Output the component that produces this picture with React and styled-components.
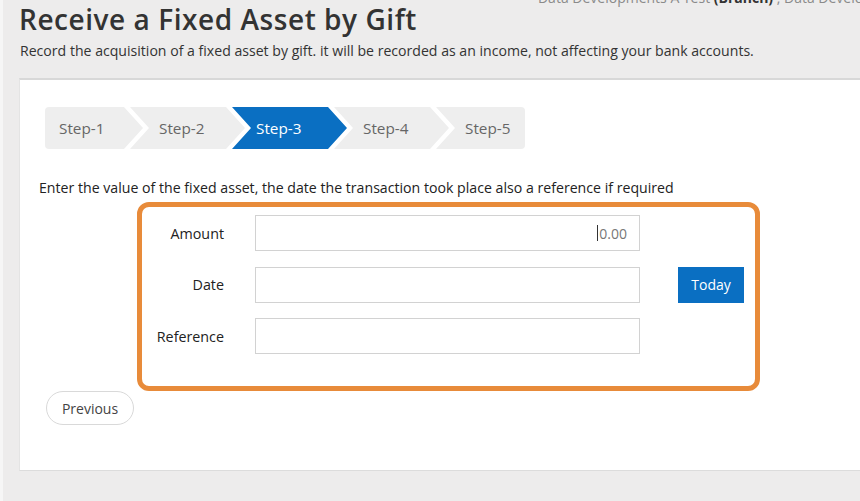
import React from "react";
import styled, { createGlobalStyle } from "styled-components";

const Global = createGlobalStyle`
  html, body { margin: 0; padding: 0; }
  body {
    background: #edecec;
    font-family: "Open Sans", "Liberation Sans", sans-serif;
    color: #333;
    overflow: hidden;
  }
  #root { width: 860px; height: 501px; overflow: hidden; }
`;

const Page = styled.div`
  width: 860px;
  height: 501px;
  box-sizing: border-box;
  border-left: 3px solid #f6f6f6;
  padding-left: 16px;
  overflow: hidden;
`;

const Header = styled.div`
  display: flex;
  align-items: flex-start;
  min-width: 0;
`;

const Title = styled.h1`
  flex: none;
  margin: 0;
  padding-top: 1px;
  font-size: 28px;
  line-height: 36px;
  font-weight: 600;
  color: #333;
  letter-spacing: 0.55px;
`;

const Info = styled.div`
  flex: 1;
  min-width: 0;
  margin-left: 121px;
  margin-top: -11px;
  font-size: 14px;
  line-height: 18px;
  color: #8a8a8a;
  white-space: nowrap;
  overflow: hidden;
  b { color: #333; font-weight: 700; }
`;

const Subtitle = styled.p`
  margin: 5px 0 0 1px;
  font-size: 14.1px;
  line-height: 18px;
  color: #333;
  white-space: nowrap;
`;

const Panel = styled.div`
  margin-top: 18px;
  width: 900px;
  height: 363px;
  box-sizing: content-box;
  background: #fff;
  border-top: 2px solid #d8d8d8;
  border-bottom: 1px solid #dcdcdc;
  border-left: 1px solid #e4e4e4;
  padding: 27px 0 0 18px;
`;

const Steps = styled.div`
  display: flex;
  width: 480px;
  height: 42px;
  margin-left: 7px;
  border-radius: 4px;
  overflow: hidden;
`;

const Step = styled.div`
  flex: none;
  box-sizing: border-box;
  height: 42px;
  display: flex;
  align-items: center;
  font-size: 15.3px;
  color: ${(p) => (p.$active ? "#fff" : "#666")};
  background: ${(p) => (p.$active ? "#0a6fc2" : "#eeeeee")};
  width: ${(p) => (p.$first ? "98px" : p.$last ? "91px" : "115px")};
  margin-left: ${(p) => (p.$first ? "0" : "-13px")};
  padding-left: ${(p) => (p.$first ? "14px" : p.$active ? "24px" : "29px")};
  clip-path: ${(p) =>
    p.$first
      ? "polygon(0 0, calc(100% - 19px) 0, 100% 50%, calc(100% - 19px) 100%, 0 100%)"
      : p.$last
      ? "polygon(0 0, 100% 0, 100% 100%, 0 100%, 19px 50%)"
      : "polygon(0 0, calc(100% - 19px) 0, 100% 50%, calc(100% - 19px) 100%, 0 100%, 19px 50%)"};
`;

const Instruction = styled.p`
  margin: 30px 0 0 1px;
  font-size: 14.15px;
  line-height: 18px;
  color: #222;
  white-space: nowrap;
`;

const Form = styled.div`
  margin: 5px 0 0 99px;
  width: 623px;
  box-sizing: border-box;
  border: 5px solid #e88b3a;
  border-radius: 12px;
  padding: 8px 11px 32px 0;
  display: grid;
  grid-template-columns: 82px 385px 66px;
  column-gap: 31px;
  row-gap: 15.5px;
  align-items: center;
  & > :nth-child(3n) { margin-left: 7px; }
`;

const Label = styled.div`
  text-align: right;
  font-size: 14.3px;
  color: #222;
`;

const Field = styled.div`
  height: 36px;
  box-sizing: border-box;
  border: 1px solid #d2d2d2;
  background: #fff;
  display: flex;
  align-items: center;
  justify-content: flex-end;
  padding-right: 12px;
  font-size: 14px;
  color: #777;
`;

const Caret = styled.span`
  display: inline-block;
  width: 1px;
  height: 16px;
  background: #333;
  margin-right: 1px;
`;

const TodayButton = styled.button`
  height: 36px;
  width: 66px;
  border: none;
  border-radius: 0;
  background: #0a6fc2;
  color: #fff;
  font-family: inherit;
  font-size: 14px;
  padding: 0;
`;

const Empty = styled.div``;

const PrevButton = styled.button`
  display: block;
  margin: 0 0 0 8px;
  height: 34px;
  width: 88px;
  border: 1px solid #d9d9d9;
  border-radius: 17px;
  background: #fff;
  color: #444;
  font-family: inherit;
  font-size: 14px;
  padding: 0;
`;

const steps = ["Step-1", "Step-2", "Step-3", "Step-4", "Step-5"];

export default function App() {
  return (
    <>
      <Global />
      <Page>
        <Header>
          <Title>Receive a Fixed Asset by Gift</Title>
          <Info>
            Data Developments A Test <b>(Branch)</b> , Data Developments A Test (Company)
          </Info>
        </Header>
        <Subtitle>
          Record the acquisition of a fixed asset by gift. it will be recorded as an income, not affecting your bank accounts.
        </Subtitle>
        <Panel>
          <Steps>
            {steps.map((s, i) => (
              <Step
                key={s}
                $first={i === 0}
                $last={i === steps.length - 1}
                $active={i === 2}
              >
                {s}
              </Step>
            ))}
          </Steps>
          <Instruction>
            Enter the value of the fixed asset, the date the transaction took place also a reference if required
          </Instruction>
          <Form>
            <Label>Amount</Label>
            <Field>
              <Caret />
              0.00
            </Field>
            <Empty />
            <Label>Date</Label>
            <Field />
            <TodayButton>Today</TodayButton>
            <Label>Reference</Label>
            <Field />
            <Empty />
          </Form>
          <PrevButton>Previous</PrevButton>
        </Panel>
      </Page>
    </>
  );
}
